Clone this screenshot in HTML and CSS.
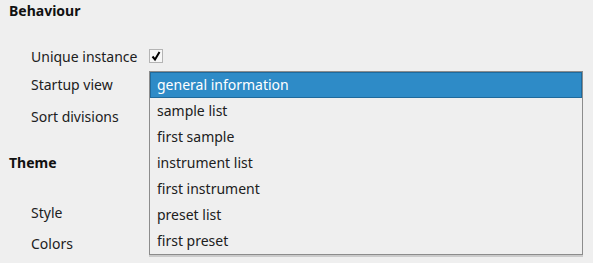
FILE: index.html
```html
<!DOCTYPE html>
<html lang="en">
<head>
<meta charset="UTF-8" />
<title>Settings</title>
<link rel="stylesheet" href="styles.css">
</head>
<body>

<div class="settings">

  <!-- Behaviour -->
  <h2 class="section">Behaviour</h2>
  <div class="rows behaviour">
    <div class="row r-unique">
      <span class="label">Unique instance</span>
      <span class="check">
        <svg width="12" height="12" viewBox="0 0 12 12"><path d="M2.5 6.5 L5 9.5 L9.5 2" fill="none" stroke="#000" stroke-width="2"/></svg>
      </span>
    </div>
    <div class="row r-startup">
      <span class="label">Startup view</span>
    </div>
    <div class="row r-sort">
      <span class="label">Sort divisions</span>
    </div>
  </div>

  <!-- Theme -->
  <h2 class="section theme">Theme</h2>
  <div class="rows theme-rows">
    <div class="row r-style">
      <span class="label">Style</span>
    </div>
    <div class="row r-colors">
      <span class="label">Colors</span>
    </div>
  </div>

</div>

<!-- Startup view popup list -->
<ul class="popup">
  <li class="selected">general information</li>
  <li>sample list</li>
  <li>first sample</li>
  <li>instrument list</li>
  <li>first instrument</li>
  <li>preset list</li>
  <li>first preset</li>
</ul>

</body>
</html>
```

FILE: styles.css
```css
/* Base */
body, html {
  margin: 0; padding: 0; height: 100%;
  background: #efefef;
  font-family: "Noto Sans", "DejaVu Sans", sans-serif;
  font-size: 14px;
  color: #202020;
  overflow: hidden;
}
.settings {
  padding: 3px 0 0 9px;
}

/* Section titles */
.section {
  margin: 0;
  height: 16px;
  line-height: 16px;
  font-size: 14px;
  font-weight: bold;
  color: #111;
}
.section.theme {
  margin-top: 21px;
}

/* Form rows */
.rows {
  padding-left: 22px;
}
.rows.behaviour {
  margin-top: 23px;
}
.rows.theme-rows {
  margin-top: 27px;
}
.row {
  display: flex;
  align-items: center;
  height: 28px;
}
.row .label {
  width: 118px;
}
.r-sort { height: 36px; }
.r-colors { height: 34px; }

.check {
  display: flex;
  width: 12px;
  height: 12px;
  border: 1px solid #b4b4b4;
  background: #f7f7f7;
}

/* Popup list */
.popup {
  position: absolute;
  left: 149px;
  top: 71px;
  width: 432px;
  margin: 0;
  padding: 0;
  list-style: none;
  background: #efefef;
  border: 1px solid #8c8c8c;
  box-shadow: 0 2px 0 0 rgba(0, 0, 0, 0.15);
}
.popup li {
  height: 26px;
  line-height: 26px;
  padding-left: 7px;
  box-sizing: border-box;
}
.popup li.selected {
  background: #2e8bc7;
  border: 1px solid #1f6a9c;
  line-height: 24px;
  padding-left: 6px;
  color: #fff;
}
```
